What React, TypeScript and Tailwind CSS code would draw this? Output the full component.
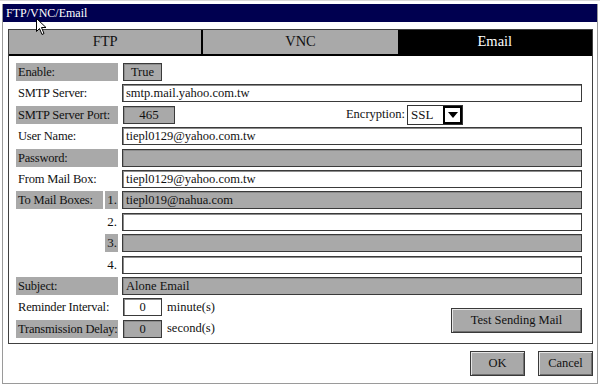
import React from "react";

const inputBase =
  "h-[18px] border border-[#3a3a3a] shadow-[inset_1px_1px_0_#8c8c8c] text-[12.5px] leading-[16px] px-[3px] text-[#111] whitespace-nowrap overflow-hidden";

function Label({ text, gray }: { text: string; gray?: boolean }) {
  return (
    <div
      className={`w-[102px] h-[18px] shrink-0 text-[12.5px] tracking-[-0.2px] leading-[18px] pl-[2px] text-[#111] whitespace-nowrap ${
        gray ? "bg-[#a9a9a9]" : ""
      }`}
    >
      {text}
    </div>
  );
}

function Input({ value, gray }: { value?: string; gray?: boolean }) {
  return (
    <div className={`${inputBase} flex-1 ml-[4px] ${gray ? "bg-[#a9a9a9]" : "bg-white"}`}>
      {value}
    </div>
  );
}

function Row({ label, gray, value }: { label: string; gray?: boolean; value?: string }) {
  return (
    <div className="flex h-[18px] items-center">
      <Label text={label} gray={gray} />
      <Input value={value} gray={gray} />
    </div>
  );
}

function MailRow({ n, value, gray, first }: { n: string; value?: string; gray?: boolean; first?: boolean }) {
  return (
    <div className="flex h-[18px] items-center">
      <div
        className={`w-[87px] h-[18px] shrink-0 text-[12.5px] tracking-[-0.2px] leading-[18px] pl-[2px] text-[#111] whitespace-nowrap ${
          first ? "bg-[#a9a9a9]" : ""
        }`}
      >
        {first ? "To Mail Boxes:" : ""}
      </div>
      <div
        className={`ml-[2px] w-[13px] h-[18px] text-[13px] leading-[18px] text-right pr-[1px] text-[#111] ${
          gray ? "bg-[#a9a9a9]" : ""
        }`}
      >
        {n}
      </div>
      <Input value={value} gray={gray} />
    </div>
  );
}

const raised =
  "bg-[#a9a9a9] border border-[#3a3a3a] shadow-[inset_1px_1px_0_#e6e6e6,inset_-1px_-1px_0_#707070] text-[#111] flex items-center justify-center";

export default function App() {
  return (
    <div className="w-[600px] h-[385px] bg-white relative overflow-hidden [font-family:'Liberation_Serif','Times_New_Roman',serif] pt-[3px] px-[2px] pb-[1px] border-t border-[#d8d8d8]">
      <div className="h-full flex flex-col border-x border-b border-[#9a9a9a]">
        <div className="h-[18px] bg-[#000050] text-white text-[12px] leading-[18px] px-[3px]">
          FTP/VNC/Email
        </div>
        <div className="flex-1 flex flex-col pl-[5px] pr-[4px] pt-[7px]">
          <div className="border border-[#404040] flex flex-col">
            <div className="grid grid-cols-3 h-[26px] border-b-2 border-black text-[14.5px]">
              <div className="bg-[#a9a9a9] flex items-center justify-center text-[#111] border-r-2 border-black">
                FTP
              </div>
              <div className="bg-[#a9a9a9] flex items-center justify-center text-[#111]">VNC</div>
              <div className="bg-black flex items-center justify-center text-white">Email</div>
            </div>
            <div className="pl-[7px] pr-[10px] pt-[7px] pb-[5px] flex flex-col gap-[3.4px]">
              <div className="flex h-[18px] items-center">
                <Label text="Enable:" gray />
                <div className={`${inputBase} ml-[5px] w-[39px] bg-[#a9a9a9] text-center`}>True</div>
              </div>
              <Row label="SMTP Server:" value="smtp.mail.yahoo.com.tw" />
              <div className="flex h-[18px] items-center">
                <Label text="SMTP Server Port:" gray />
                <div className={`${inputBase} ml-[5px] w-[52px] bg-[#a9a9a9] text-center text-[13px]`}>465</div>
                <div className="ml-auto mr-[119px] flex items-center">
                  <span className="text-[12.5px] text-[#111] mr-[2px]">Encryption:</span>
                  <div className="w-[56px] h-[20px] border border-[#333] bg-white flex items-stretch">
                    <div className="flex-1 text-[13px] leading-[18px] pl-[3px] text-[#111]">SSL</div>
                    <div className="w-[19px] border-2 border-black bg-white flex items-center justify-center">
                      <svg width="10" height="6" viewBox="0 0 10 6">
                        <path d="M0 0 H10 L5 6 Z" fill="#000" />
                      </svg>
                    </div>
                  </div>
                </div>
              </div>
              <Row label="User Name:" value="tiepl0129@yahoo.com.tw" />
              <Row label="Password:" gray />
              <Row label="From Mail Box:" value="tiepl0129@yahoo.com.tw" />
              <MailRow n="1." value="tiepl019@nahua.com" gray first />
              <MailRow n="2." />
              <MailRow n="3." gray />
              <MailRow n="4." />
              <Row label="Subject:" gray value="Alone Email" />
              <div className="flex items-start">
                <div className="flex flex-col gap-[3.4px]">
                  <div className="flex h-[18px] items-center">
                    <Label text="Reminder Interval:" />
                    <div className={`${inputBase} ml-[5px] w-[39px] bg-white text-center`}>0</div>
                    <span className="ml-[5px] text-[12.5px] text-[#111]">minute(s)</span>
                  </div>
                  <div className="flex h-[18px] items-center">
                    <Label text="Transmission Delay:" gray />
                    <div className={`${inputBase} ml-[5px] w-[39px] bg-[#a9a9a9] text-center`}>0</div>
                    <span className="ml-[5px] text-[12.5px] text-[#111]">second(s)</span>
                  </div>
                </div>
                <div className={`${raised} ml-auto mt-[10px] w-[131px] h-[25px] text-[12.5px]`}>
                  Test Sending Mail
                </div>
              </div>
            </div>
          </div>
          <div className="flex justify-end gap-[13px] mt-[7px]">
            <div className={`${raised} w-[55px] h-[25px] text-[12.5px]`}>OK</div>
            <div className={`${raised} w-[55px] h-[25px] text-[12.5px]`}>Cancel</div>
          </div>
        </div>
      </div>
      <svg className="absolute left-[36px] top-[17px]" width="12" height="18" viewBox="0 0 12 18">
        <path d="M0.5 0.5 L0.5 13.5 L3.5 10.5 L6 16.5 L8 15.5 L5.5 9.5 L10 9.5 Z" fill="#fff" stroke="#000" strokeWidth="1" />
      </svg>
    </div>
  );
}
